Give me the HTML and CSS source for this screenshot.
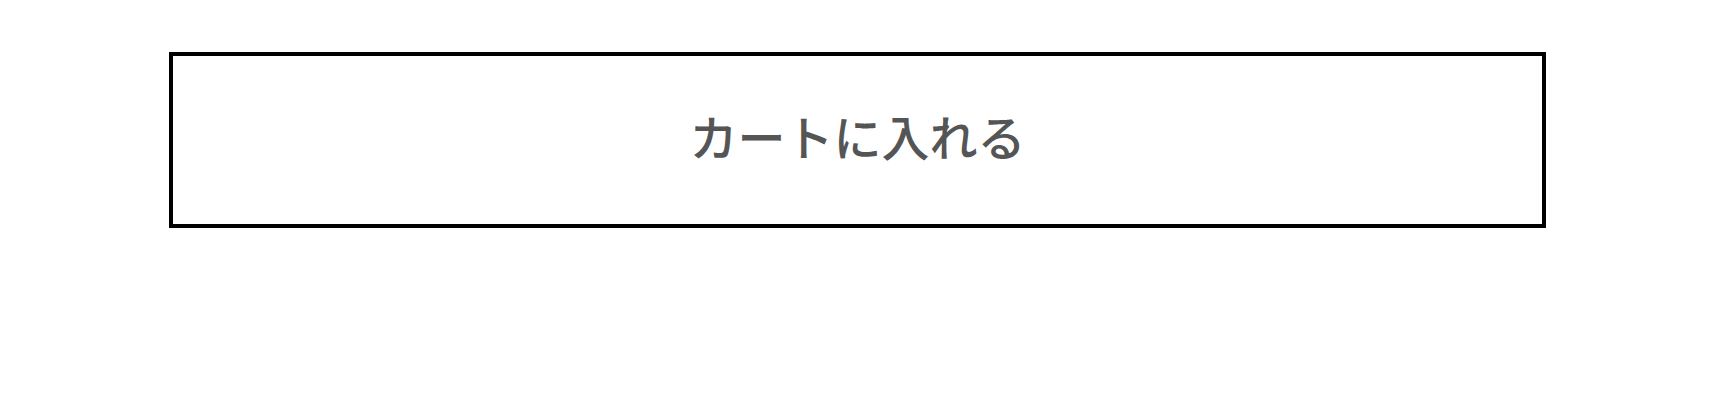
FILE: index.html
```html
<!DOCTYPE html>
<html lang="ja">
<head>
  <meta charset="UTF-8" />
  <title>カートに入れる</title>
  <meta name="viewport" content="width=device-width, initial-scale=1.0"/>
  <link rel="stylesheet" href="styles.css">
</head>
<body>

  <div class="cart">
    <button class="cart-btn" type="button">カートに入れる</button>
  </div>

</body>
</html>
```

FILE: styles.css
```css
body {
  margin: 0;
  background: #fff;
  font-family: "Noto Sans CJK JP", "Noto Sans", sans-serif;
}
.cart {
  padding: 52px 172px 0 169px;
}
.cart-btn {
  display: block;
  width: 100%;
  height: 176px;
  margin: 0;
  padding: 0 0 10px;
  background: #fff;
  border: 4px solid #000;
  border-radius: 0;
  color: #555;
  font-family: inherit;
  font-size: 48px;
  font-weight: 500;
  cursor: pointer;
}
```
